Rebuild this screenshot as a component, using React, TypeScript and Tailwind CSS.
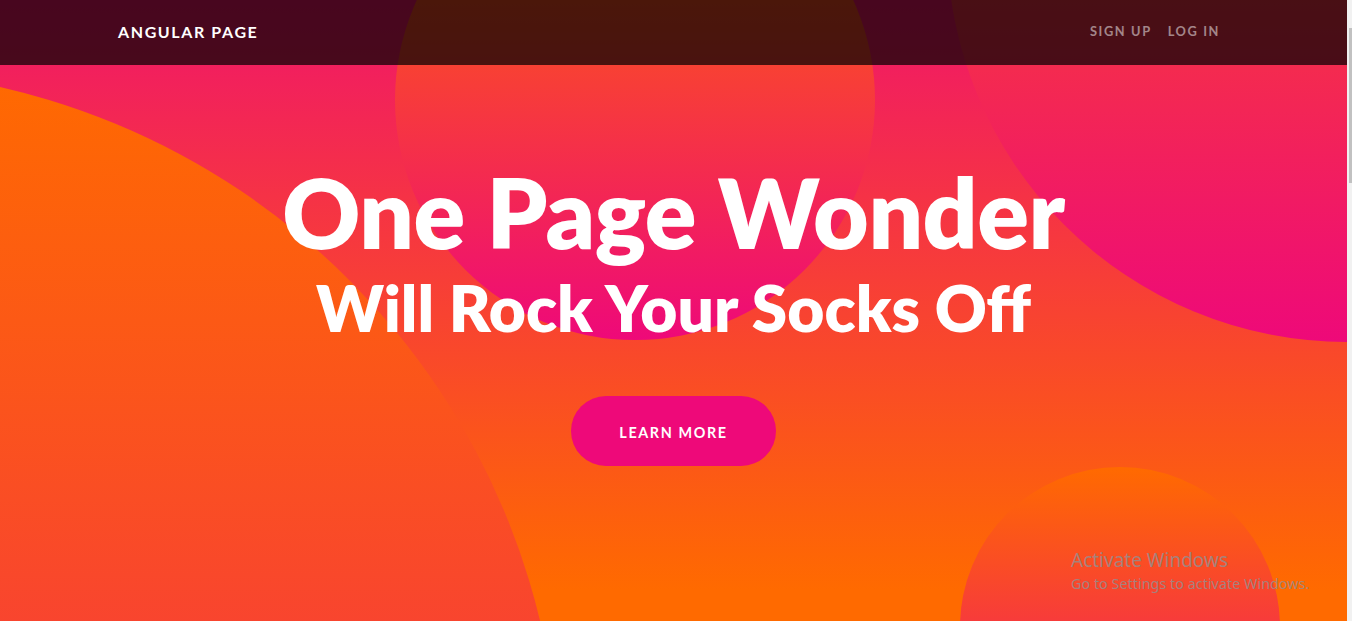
import React from "react";

export default function App() {
  return (
    <div className="flex h-[621px] w-[1352px] overflow-hidden font-['Lato',sans-serif]">
      <div className="relative flex-1 overflow-hidden bg-[linear-gradient(180deg,#f01669_0px,#ff6a00_590px)]">
        {/* background circles */}
        <div className="absolute left-[-880px] top-[69px] h-[1440px] w-[1440px] rounded-full bg-[linear-gradient(0deg,#ee0979_0%,#ff6a00_100%)]" />
        <div className="absolute left-[947px] top-[-458px] h-[800px] w-[800px] rounded-full bg-[linear-gradient(0deg,#ee0979_0%,#ff6a00_100%)]" />
        <div className="absolute left-[960px] top-[467px] h-[320px] w-[320px] rounded-full bg-[linear-gradient(0deg,#ee0979_0%,#ff6a00_100%)]" />
        <div className="absolute left-[395px] top-[-140px] h-[480px] w-[480px] rounded-full bg-[linear-gradient(0deg,#ee0979_0%,#ff6a00_100%)]" />

        {/* navbar */}
        <nav className="absolute inset-x-0 top-0 z-20 h-[65px] bg-black/70">
          <div className="flex h-full items-center justify-between pb-[2px] pl-[118px] pr-[127px]">
            <a className="text-[16px] font-bold uppercase tracking-[1.6px] text-white">Angular Page</a>
            <ul className="flex gap-[16px] text-[12.8px] font-bold uppercase tracking-[1.6px] text-white/50">
              <li>Sign Up</li>
              <li>Log In</li>
            </ul>
          </div>
        </nav>

        {/* masthead */}
        <header className="relative z-10 flex flex-col items-center pt-[154px] text-white">
          <h1 className="text-[96px] font-extrabold leading-[115px] tracking-[-0.5px]">One Page Wonder</h1>
          <h2 className="text-[64px] font-extrabold leading-[77px]">Will Rock Your Socks Off</h2>
          <button className="mt-[50px] flex h-[70px] w-[205px] items-center justify-center rounded-full bg-[#ee0979] pt-[3px] text-[14.4px] font-bold uppercase tracking-[1.6px] text-white">
            Learn More
          </button>
        </header>

        {/* windows watermark */}
        <div className="absolute left-[1071px] top-[548px] z-30 font-['Noto_Sans',sans-serif] text-[rgba(150,140,140,0.85)]">
          <p className="text-[19px] leading-[25px]">Activate Windows</p>
          <p className="text-[14.4px] leading-[21px]">Go to Settings to activate Windows.</p>
        </div>
      </div>

      {/* scrollbar */}
      <div className="w-[5px] bg-[#f1f1f1] pt-[28px]">
        <div className="ml-[2px] h-[155px] bg-[#c1c1c1]" />
      </div>
    </div>
  );
}
